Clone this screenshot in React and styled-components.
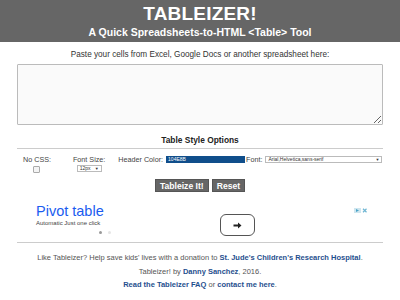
import React from 'react'
import styled, { createGlobalStyle } from 'styled-components'

const Global = createGlobalStyle`
  html, body {
    margin: 0;
    padding: 0;
    background: #fff;
    font-family: "Liberation Sans", Arial, sans-serif;
  }
`

const Header = styled.header`
  background: #666;
  color: #fff;
  text-align: center;
  height: 42px;
  padding-top: 4px;
  box-sizing: border-box;
`

const Title = styled.h1`
  margin: 0;
  font-size: 19px;
  line-height: 19px;
  font-weight: bold;
  letter-spacing: 0.2px;
`

const Subtitle = styled.h2`
  margin: 3px 0 0;
  font-size: 10.5px;
  line-height: 12px;
  font-weight: bold;
`

const Main = styled.main`
  margin: 0 17px;
`

const Prompt = styled.p`
  margin: 8px 0 4px;
  text-align: center;
  font-size: 8.2px;
  line-height: 10px;
  color: #333;
`

const Paste = styled.textarea`
  display: block;
  box-sizing: border-box;
  width: 100%;
  height: 61px;
  margin: 0;
  background: #fafafa;
  border: 1px solid #bbb;
  border-radius: 1px;
  resize: vertical;
`

const SectionTitle = styled.h3`
  margin: 10px 0 0;
  text-align: center;
  font-size: 8.4px;
  line-height: 10px;
  font-weight: bold;
  color: #222;
  padding-bottom: 3px;
  border-bottom: 1px solid #ccc;
`

const Options = styled.div`
  display: flex;
  align-items: flex-start;
  padding: 6px 0 0 6px;
  font-size: 7.2px;
  line-height: 9px;
  color: #444;
`

const Stack = styled.div`
  display: flex;
  flex-direction: column;
  align-items: center;
  margin-left: ${p => p.$offset || 0}px;
`

const Inline = styled.div`
  display: flex;
  align-items: center;
  gap: 3px;
  margin-left: ${p => p.$offset || 0}px;
`

const Check = styled.span`
  display: block;
  width: 5px;
  height: 5px;
  margin-top: 2px;
  border: 1px solid #aaa;
  background: #f4f4f4;
  border-radius: 1px;
`

const Picker = styled.span`
  display: flex;
  align-items: center;
  justify-content: space-between;
  box-sizing: border-box;
  width: ${p => p.$w}px;
  height: 7px;
  padding: 0 2px;
  border: 1px solid #bbb;
  background: #fff;
  font-size: 5px;
  line-height: 5px;
  color: #333;
  margin-top: ${p => p.$top || 0}px;
`

const Caret = styled.span`
  font-size: 4px;
`

const ColorField = styled.span`
  display: flex;
  align-items: center;
  box-sizing: border-box;
  width: 79px;
  height: 7px;
  padding: 0 2px;
  background: #104e8b;
  color: #fff;
  font-size: 5px;
  line-height: 5px;
`

const Buttons = styled.div`
  display: flex;
  justify-content: center;
  gap: 3px;
  margin: 6px 0 0;
`

const Button = styled.button`
  background: #666;
  color: #fff;
  border: 1px solid #555;
  font-family: inherit;
  font-weight: bold;
  font-size: 8.6px;
  line-height: 10px;
  padding: 1px 4px;
  height: 13px;
  border-radius: 0;
`

const Ad = styled.div`
  display: flex;
  align-items: flex-start;
  margin-top: 11px;
  padding: 0 15px 0 19px;
  height: 39px;
  border-bottom: 1px solid #ccc;
`

const AdText = styled.div`
  width: 184px;
  display: flex;
  flex-direction: column;
`

const AdTitle = styled.div`
  color: #1a5cf0;
  font-size: 14.5px;
  line-height: 16px;
`

const AdSub = styled.div`
  margin-top: 1px;
  font-size: 6px;
  line-height: 7px;
  color: #444;
`

const Dots = styled.div`
  display: flex;
  gap: 6px;
  margin: 4px 0 0 63px;
`

const Dot = styled.span`
  width: 3px;
  height: 3px;
  border-radius: 50%;
  background: ${p => (p.$on ? '#999' : '#e5e5e5')};
`

const Arrow = styled.button`
  display: flex;
  align-items: center;
  justify-content: center;
  width: 35px;
  height: 22px;
  margin-top: 11px;
  padding: 0;
  background: #fff;
  border: 1.5px solid #555;
  border-radius: 6px;
`

const AdChoice = styled.div`
  margin-left: auto;
  margin-top: 5px;
  display: flex;
`

const Footer = styled.footer`
  text-align: center;
  font-size: 7.5px;
  line-height: 13.5px;
  color: #555;
  padding-top: 8px;
`

const Line = styled.p`
  margin: 0;
`

const Link = styled.a`
  color: #1f4f8e;
  font-weight: bold;
  text-decoration: none;
`

export default function App() {
  return (
    <>
      <Global />
      <Header>
        <Title>TABLEIZER!</Title>
        <Subtitle>A Quick Spreadsheets-to-HTML &lt;Table&gt; Tool</Subtitle>
      </Header>
      <Main>
        <Prompt>Paste your cells from Excel, Google Docs or another spreadsheet here:</Prompt>
        <Paste />
        <SectionTitle>Table Style Options</SectionTitle>
        <Options>
          <Stack>
            <span>No CSS:</span>
            <Check />
          </Stack>
          <Stack $offset={22}>
            <span>Font Size:</span>
            <Picker $w={25} $top={1}>12px <Caret>▼</Caret></Picker>
          </Stack>
          <Inline $offset={13}>
            <span>Header Color:</span>
            <ColorField>104E8B</ColorField>
          </Inline>
          <Inline $offset={1}>
            <span>Font:</span>
            <Picker $w={117}>Arial,Helvetica,sans-serif <Caret>▼</Caret></Picker>
          </Inline>
        </Options>
        <Buttons>
          <Button>Tableize It!</Button>
          <Button>Reset</Button>
        </Buttons>
        <Ad>
          <AdText>
            <AdTitle>Pivot table</AdTitle>
            <AdSub>Automatic Just one click</AdSub>
            <Dots>
              <Dot $on />
              <Dot />
            </Dots>
          </AdText>
          <Arrow aria-label="Open">
            <svg width="9" height="7" viewBox="0 0 9 7">
              <path d="M0.5 2.6h4.5V0.5L8.5 3.5 5 6.5V4.4H0.5z" fill="#222" />
            </svg>
          </Arrow>
          <AdChoice>
            <svg width="14" height="5" viewBox="0 0 14 5">
              <rect x="0" y="0" width="7" height="5" fill="#cfe6ef" />
              <path d="M2 1v3l3-1.5z" fill="#4aa3c7" />
              <path d="M9 0.8l3.5 3.4M12.5 0.8L9 4.2" stroke="#6fb6d3" strokeWidth="1.2" />
            </svg>
          </AdChoice>
        </Ad>
        <Footer>
          <Line>
            Like Tableizer? Help save kids' lives with a donation to{' '}
            <Link href="#">St. Jude's Children's Research Hospital</Link>.
          </Line>
          <Line>
            Tableizer! by <Link href="#">Danny Sanchez</Link>, 2016.
          </Line>
          <Line>
            <Link href="#">Read the Tableizer FAQ</Link> or <Link href="#">contact me here</Link>.
          </Line>
        </Footer>
      </Main>
    </>
  )
}
